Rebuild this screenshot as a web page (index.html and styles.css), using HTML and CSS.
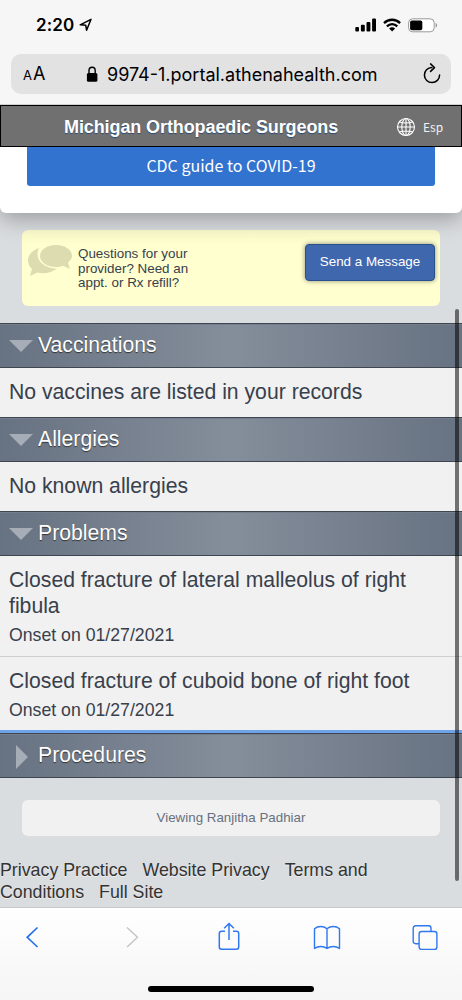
FILE: index.html
```html
<!DOCTYPE html>
<html lang="en">
<head>
<meta charset="utf-8">
<meta name="viewport" content="width=device-width">
<title>Michigan Orthopaedic Surgeons</title>
<link rel="stylesheet" href="styles.css">
</head>
<body>
<div class="phone">
  <div class="browser-top">
    <div class="status">
      <span class="time">2:20</span>
      <svg class="loc" width="13" height="14" viewBox="0 0 13 14"><path d="M1.2 6.8 12 1.3 7.6 12.3 6.7 7.2Z" fill="none" stroke="#000" stroke-width="1.5" stroke-linejoin="round"/></svg>
      <span class="spacer"></span>
      <svg class="signal" width="22" height="14" viewBox="0 0 22 14"><rect x="0.3" y="9" width="3.7" height="4.6" rx="1"/><rect x="5.9" y="6.8" width="3.9" height="6.8" rx="1"/><rect x="11.5" y="3.9" width="3.9" height="9.7" rx="1"/><rect x="17.1" y="0.5" width="3.9" height="13.1" rx="1"/></svg>
      <svg class="wifi" width="18" height="14" viewBox="0 0 18 14"><g fill="none" stroke="#000" stroke-width="2.3"><path d="M1 5.1C5.6.6 12.6.6 17.1 5.1"/><path d="M3.9 8.3c3-2.9 7.4-2.9 10.4 0"/></g><path d="M6.1 10.4c1.7-1.5 4.3-1.5 6 0l-3 3.1z"/></svg>
      <svg class="battery" width="30" height="15" viewBox="0 0 30 15"><rect x=".6" y=".8" width="25.6" height="13" rx="4" fill="#fff" stroke="#999" stroke-width="1"/><rect x="2.1" y="2.4" width="12.2" height="9.8" rx="1.8"/><path d="M27.6 5.1c2 .7 2 4 0 4.7z" fill="#999"/></svg>
    </div>
    <div class="address">
      <span class="aa"><small>A</small>A</span>
      <svg class="lock" width="12" height="17" viewBox="0 0 12 17"><rect x=".9" y="7" width="10.5" height="8.8" rx="1.5"/><path d="M3 7.5V4.6a3.1 3.4 0 0 1 6.2 0v2.900" fill="none" stroke="#000" stroke-width="1.4"/></svg>
      <span class="url">9974-1.portal.athenahealth.com</span>
      <svg class="reload" width="20" height="22" viewBox="0 0 20 22"><path d="M9.800 4.400A7.600 7.600 0 1 0 17.600 12" fill="none" stroke="#000" stroke-width="1.5" stroke-linecap="round"/><path d="M8.600 .900l3.900 3.700-3.900 3.800" fill="none" stroke="#000" stroke-width="1.5" stroke-linecap="round" stroke-linejoin="round"/></svg>
    </div>
  </div>

  <header class="header">
    <h1 class="title">Michigan Orthopaedic Surgeons</h1>
    <svg class="globe" width="20" height="20" viewBox="0 0 20 20"><g fill="none" stroke="#fff" stroke-width="1.1"><circle cx="10" cy="10" r="8.5"/><ellipse cx="10" cy="10" rx="4.2" ry="8.5"/><path d="M10 1.5v17M1.5 10h17M3.2 5q6.8 2 13.6 0M3.2 15q6.8-2 13.6 0"/></g></svg>
    <span class="lang">Esp</span>
  </header>

  <main class="page">
    <div class="notice"><div class="cdc"><span>CDC guide to COVID-19</span></div></div>
    <div class="ask">
      <svg class="bubbles" width="46" height="34" viewBox="0 0 46 34"><path d="M12 4C5 6.5 1 11 1 16.5c0 3.5 1.600 6.300 4 8.600L3 32l7.500-3.400c7 1.600 14.500 0 19.500-4.200C20 25 10.500 18.500 10.500 10.500 10.500 8 11 6 12 4Z"/><path d="M29 1C20 1 13 5.800 13 12s7 11 16 11c2.500 0 5-.4 7-1.200L43 25l-2-6.500c2.600-2 4-4.200 4-6.500C45 5.800 38 1 29 1Z"/></svg>
      <p class="ask-text">Questions for your<br>provider? Need an<br>appt. or Rx refill?</p>
      <div class="send"><span>Send a Message</span></div>
    </div>

    <h2 class="bar"><i class="tri down"></i><span>Vaccinations</span></h2>
    <div class="row"><p class="main">No vaccines are listed in your records</p></div>
    <h2 class="bar"><i class="tri down"></i><span>Allergies</span></h2>
    <div class="row"><p class="main">No known allergies</p></div>
    <h2 class="bar"><i class="tri down"></i><span>Problems</span></h2>
    <div class="row problem"><p class="main">Closed fracture of lateral malleolus of right<br>fibula</p><p class="onset">Onset on 01/27/2021</p></div>
    <div class="row problem second"><p class="main">Closed fracture of cuboid bone of right foot</p><p class="onset">Onset on 01/27/2021</p></div>
    <h2 class="bar"><i class="tri right"></i><span>Procedures</span></h2>

    <div class="viewing"><span>Viewing Ranjitha Padhiar</span></div>
    <footer class="links">
      <div><a>Privacy Practice</a><a>Website Privacy</a><a>Terms and</a></div>
      <div><a>Conditions</a><a>Full Site</a></div>
    </footer>
    <div class="scrollbar"></div>
  </main>

  <nav class="toolbar">
    <div class="tools">
      <svg width="24" height="30" viewBox="0 0 24 30"><path d="M16.500 5.500 6.200 15.300 16.500 25" fill="none" stroke="#2670ea" stroke-width="1.7"/></svg>
      <svg width="24" height="30" viewBox="0 0 24 30"><path d="M7 5.500 17.500 15.300 7 25" fill="none" stroke="#c4c4c4" stroke-width="1.4"/></svg>
      <svg width="24" height="30" viewBox="0 0 24 30"><path d="M8 9.300H4.500Q2.300 9.300 2.300 11.500V25Q2.300 27.200 4.500 27.200H19.500Q21.700 27.200 21.700 25V11.500Q21.700 9.300 19.500 9.300H16M12 18V1.800M7.200 6.300 12 1.500l4.800 4.800" fill="none" stroke="#2f78f0" stroke-width="1.5"/></svg>
      <svg width="28" height="30" viewBox="0 0 28 30"><path d="M14 6.700C10.500 3.800 5 3.800 1.500 6.700V26.500c3.500-2.600 9-2.600 12.500 0 3.500-2.600 9-2.600 12.500 0V6.700C23 3.800 17.500 3.800 14 6.700ZM14 6.700V26.500" fill="none" stroke="#2f78f0" stroke-width="1.4" stroke-linejoin="round"/></svg>
      <svg width="26" height="30" viewBox="0 0 26 30"><g fill="none" stroke="#2f78f0" stroke-width="1.4"><path d="M7 21.700H3.700Q1.200 21.700 1.200 19.200V6.300Q1.200 3.800 3.700 3.800H16.500Q19 3.800 19 6.300V9.500"/><rect x="7.100" y="9.500" width="17.800" height="17.900" rx="2.500"/></g></svg>
    </div>
    <div class="home"></div>
  </nav>
</div>
</body>
</html>
```
FILE: styles.css
```css
* { box-sizing: border-box; }
body { margin: 0; font-family: "Liberation Sans", Arial, sans-serif; color: #38404c; background: #dadde0; }
h1, h2, p { margin: 0; font-weight: normal; }
svg { display: block; flex: none; }
span, a { white-space: nowrap; }
.phone { width: 462px; height: 1000px; overflow: hidden; display: flex; flex-direction: column; }

.browser-top { height: 105px; flex: none; background: #f6f6f6; border-bottom: 1px solid #cfcfcf; padding-top: 14px; font-family: Inter, sans-serif; color: #000; }
.status { display: flex; height: 22px; align-items: center; padding: 0 24px 0 36px; }
.time { font-size: 17px; font-weight: 600; letter-spacing: .1px; }
.loc { margin-left: 5px; }
.spacer { flex: 1; }
.wifi { margin-left: 6px; }
.battery { margin-left: 7px; }
.address { margin: 18px 11px 0; height: 40px; border-radius: 10px; background: #e2e2e3; display: flex; align-items: center; padding: 0 9px 0 12px; }
.aa { font-size: 18px; width: 63px; line-height: 22px; padding-top: 1px; }
.aa small { font-size: 13px; margin-right: 1px; }
.lock { margin: 0 9px 0 0; }
.url { font-size: 18px; flex: 1; }

.header { height: 42px; flex: none; background: #707070; border: 1px solid #000; display: flex; align-items: center; position: relative; z-index: 1; }
.title { font-size: 18px; letter-spacing: -.1px; font-weight: bold; color: #fff; text-shadow: 0 1px 1px #2b4a75; padding: 2px 0 0 63px; width: 395px; white-space: nowrap; }
.globe { margin-top: 1px; }
.lang { color: #f1f1f1; font: 12px "Noto Sans CJK SC", "Noto Sans", sans-serif; margin-left: 7px; }

.page { flex: 1; min-height: 0; position: relative; background: #dadde0; overflow: hidden; }
.notice { height: 66px; background: #fff; border-radius: 0 0 6px 6px; box-shadow: 0 6px 22px rgba(0,0,0,.3); padding: 0 27px; position: relative; }
.cdc { height: 39px; background: #3273d0; border-radius: 0 0 3px 3px; color: #fff; font: 16px/36px "Noto Sans CJK SC", "Noto Sans", sans-serif; text-align: center; }
.ask { height: 76px; margin: 17px 22px 0; border-radius: 6px; background: linear-gradient(#fafacb, #ffffd0 18px); display: flex; padding: 14px 5px 0; }
.bubbles { fill: #dcdcb0; }
.ask-text { font-size: 13.4px; line-height: 14.5px; padding: 3px 0 0 5px; flex: 1; }
.send { width: 130px; height: 37px; border: 1px solid #29508c; border-radius: 4px; background: #3f67ad; box-shadow: 0 0 5px rgba(0,0,0,.45); color: #fff; font-size: 13.4px; line-height: 34px; text-align: center; }

.bar { height: 45px; border: 1px solid #40464f; border-width: 1px 0; box-shadow: inset 0 1px #747f8d; background: linear-gradient(90deg, #677282, #848d9a 49%, #848d9a 51%, #677282); color: #fff; font-size: 21.2px; text-shadow: 0 1px 1px #333; display: flex; align-items: center; }
.bar span { padding-bottom: 2px; }
.ask + .bar { margin-top: 17px; }
.tri { width: 38px; padding-left: 9px; flex: none; }
.tri::before { content: ""; display: block; width: 0; border-style: solid; margin-top: 1px; }
.down::before { border-color: #a6adb6 transparent; border-width: 12px 12px 0; }
.right::before { border-color: transparent #a6adb6; border-width: 12px 0 12px 12px; margin-left: 7px; margin-top: 3px; }
.row { height: 49px; background: #f1f1f1; padding: 11px 9px 0; }
.main { font-size: 21.2px; line-height: 26px; white-space: nowrap; }
.problem { height: 101px; border-bottom: 1px solid #cfcfcf; }
.onset { font-size: 17.7px; line-height: 26px; padding-top: 3px; white-space: nowrap; }
.second { height: 76px; border-bottom: 3px solid #6fa3e8; }
.viewing { height: 36px; margin: 22px 22px 0; border-radius: 6px; background: #f1f1f1; color: #687080; font-size: 13.35px; line-height: 36px; text-align: center; }
.links { color: #333; font-size: 17.8px; line-height: 22px; padding-top: 23px; text-shadow: 0 1px #eee; }
.links div { display: flex; gap: 15px; }
.scrollbar { position: absolute; left: 455px; top: 162px; width: 4px; height: 572px; border-radius: 2px; background: rgba(0,0,0,.53); }

.toolbar { height: 93px; flex: none; border-top: 1px solid #c8cbce; background: linear-gradient(#fff, #f5f5f5); }
.tools { display: grid; grid-template-columns: 99px 97px 96px 99px 26px; padding: 14px 0 0 21px; }
.home { width: 166px; height: 6px; margin: 34px auto 0; border-radius: 3px; background: #000; }
```
